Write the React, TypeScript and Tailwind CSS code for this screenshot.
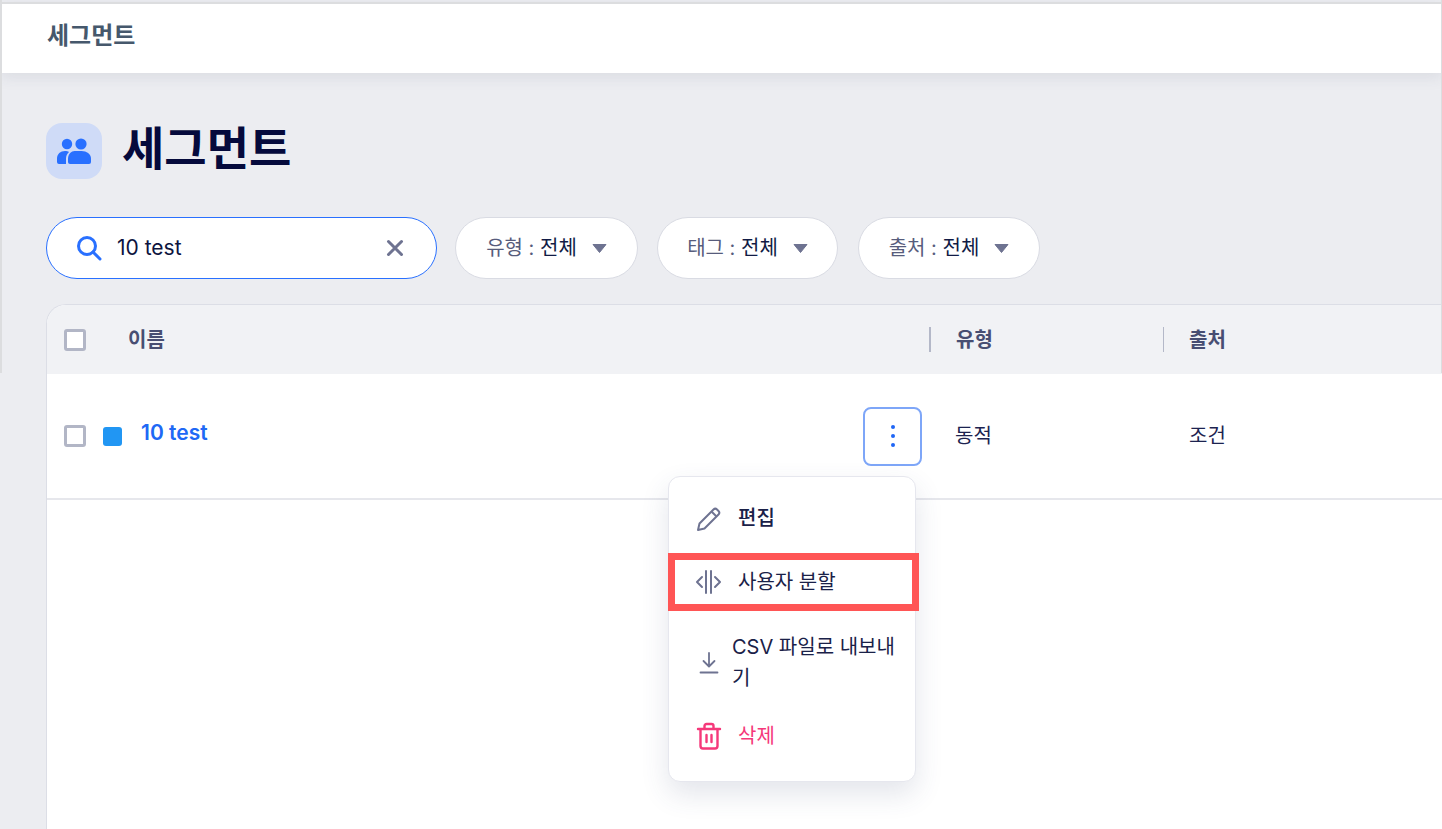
import { ReactNode } from "react";

const FONT = "[font-family:Inter,'Noto_Sans_CJK_KR',sans-serif]";

function Checkbox() {
  return <div className="w-[22px] h-[22px] rounded-[3px] border-[3px] border-[#b2b6c6] bg-white shrink-0" />;
}

function Caret() {
  return (
    <svg width="15" height="10" viewBox="0 0 15 10" className="shrink-0">
      <path d="M1 1.5h13L7.5 9.5z" fill="#6e7391" stroke="#6e7391" strokeLinejoin="round" />
    </svg>
  );
}

function FilterPill({ label, width }: { label: string; width: string }) {
  return (
    <div className={`${width} h-[62px] rounded-full bg-white border border-[#d9dbe3] flex items-center justify-center gap-[15px] text-[20px]`}>
      <span>
        <span className="text-[#575c7c]">{label} : </span>
        <span className="text-[#111b45]">전체</span>
      </span>
      <Caret />
    </div>
  );
}

function MenuItem({ icon, children, className }: { icon: ReactNode; children: ReactNode; className: string }) {
  return (
    <div className={`flex items-center ${className}`}>
      <div className="w-[28px] flex justify-center shrink-0">{icon}</div>
      {children}
    </div>
  );
}

export default function App() {
  return (
    <div className={`relative w-[1442px] h-[829px] overflow-hidden bg-[#ecedf1] ${FONT}`}>
      <div className="absolute left-0 top-0 w-[2px] h-[373px] bg-[#dcdddf] z-20" />
      <div className="absolute right-0 top-0 w-[1px] h-[373px] bg-[#dcdddf] z-20" />

      <header className="mt-[2px] h-[71px] bg-white flex items-center pl-[47px] shadow-[0_4px_14px_rgba(60,70,100,0.1)] border-t-2 border-[#dcdddf]">
        <span className="text-[24px] font-semibold text-[#46586c] relative top-[-3px]">세그먼트</span>
      </header>

      <main className="pl-[46px] pt-[50px]">
        <div className="flex items-center gap-[20px] h-[56px]">
          <div className="w-[56px] h-[56px] rounded-[16px] bg-[#cfdbf7] flex items-center justify-center">
            <svg width="36" height="28" viewBox="0 0 36 28" fill="#2970ff">
              <circle cx="11" cy="7" r="5.2" />
              <circle cx="25" cy="7" r="5.6" />
              <path d="M1 25v-3.5C1 17 4.500 14 9 14c1.500 0 3 .4 4 1-2 1.700-3 4-3 6.500V27H3a2 2 0 0 1-2-2z" />
              <path d="M12 25v-3.500c0-4.500 3.500-7.500 6.500-7.500h7c5 0 9.500 3 9.500 7.500V25a2 2 0 0 1-2 2H14a2 2 0 0 1-2-2z" />
            </svg>
          </div>
          <h1 className="text-[46px] leading-[56px] font-bold text-[#050a3c] relative top-[-3px]">세그먼트</h1>
        </div>

        <div className="flex items-center mt-[38px] h-[62px]">
          <div className="w-[391px] h-[62px] rounded-full bg-white border border-[#2970ff] flex items-center pl-[29px] pr-[32px]">
            <svg width="26" height="26" viewBox="0 0 26 26" fill="none" stroke="#2970ff" strokeWidth="3" className="shrink-0">
              <circle cx="11" cy="11" r="8.500" />
              <path d="M17 17l7 7" strokeLinecap="round" />
            </svg>
            <span className="ml-[15px] text-[21px] text-[#0d1440] flex-1">10 test</span>
            <svg width="18" height="18" viewBox="0 0 18 18" stroke="#6e7391" strokeWidth="3" strokeLinecap="round">
              <path d="M2.500 2.500l13 13M15.500 2.500l-13 13" />
            </svg>
          </div>
          <div className="ml-[18px]">
            <FilterPill label="유형" width="w-[183px]" />
          </div>
          <div className="ml-[19px]">
            <FilterPill label="태그" width="w-[181px]" />
          </div>
          <div className="ml-[20px]">
            <FilterPill label="출처" width="w-[182px]" />
          </div>
        </div>

        <section className="mt-[25px] w-[1440px] h-[560px] bg-white rounded-tl-[20px] border-l border-t border-[#dcdee6] overflow-hidden">
          <div className="h-[69px] bg-[#f1f2f5] grid grid-cols-[882px_234px_1fr] items-center text-[20px] font-semibold text-[#484e72]">
            <div className="flex items-center pl-[17px]">
              <Checkbox />
              <span className="ml-[42px]">이름</span>
            </div>
            <div className="flex items-center h-[25px] border-l-2 border-[#b4b8c8] pl-[25px]">유형</div>
            <div className="flex items-center h-[25px] border-l border-[#b4b8c8] pl-[25px]">출처</div>
          </div>

          <div className="h-[126px] border-b-2 border-[#e6e7ec] grid grid-cols-[882px_234px_1fr] items-center text-[20px] text-[#1c2350]">
            <div className="flex items-center pl-[17px]">
              <Checkbox />
              <div className="ml-[17px] w-[19px] h-[19px] rounded-[3px] bg-[#2196f3]" />
              <span className="ml-[19px] text-[21px] font-semibold text-[#2068f5] relative top-[-3px]">10 test</span>
              <div className="ml-auto mr-[7px] w-[59px] h-[59px] rounded-[8px] border-2 border-[#7ea6f8] flex flex-col items-center justify-center gap-[5px]">
                <div className="w-[4px] h-[4px] rounded-full bg-[#1f66f5]" />
                <div className="w-[4px] h-[4px] rounded-full bg-[#1f66f5]" />
                <div className="w-[4px] h-[4px] rounded-full bg-[#1f66f5]" />
              </div>
            </div>
            <div className="pl-[26px]">동적</div>
            <div className="pl-[26px]">조건</div>
          </div>
        </section>
      </main>

      {/* row action menu */}
      <div className="absolute left-[668px] top-[476px] w-[248px] h-[306px] rounded-[12px] bg-white border border-[#e6e7ee] shadow-[0_12px_28px_rgba(60,70,110,0.14)] z-10 pl-[26px] pr-[20px] text-[20px] text-[#1a2148]">
        <MenuItem
          className="h-[83px] gap-[15px]"
          icon={
            <svg width="28" height="28" viewBox="0 0 28 28" fill="none" stroke="#6e7391" strokeWidth="2" strokeLinejoin="round">
              <path d="M3 25l1.500-6.500L18.500 4.500a2.500 2.500 0 0 1 3.500 0l1.500 1.500a2.500 2.500 0 0 1 0 3.500L9.500 23.500z" />
              <path d="M16.500 6.500l5 5" />
            </svg>
          }
        >
          <span className="font-medium relative top-[-1px]">편집</span>
        </MenuItem>
        <MenuItem
          className="h-[43px] gap-[15px] mt-[0px]"
          icon={
            <svg width="28" height="28" viewBox="0 0 28 28" fill="none" stroke="#6e7391" strokeWidth="2" strokeLinecap="round" strokeLinejoin="round">
              <path d="M11 3v22M16 3v22" />
              <path d="M7 9l-5 5 5 5M20 9l5 5-5 5" />
            </svg>
          }
        >
          <span className="whitespace-nowrap">사용자 분할</span>
        </MenuItem>
        <MenuItem
          className="h-[92px] gap-[9px] mt-[14px]"
          icon={
            <svg width="20" height="24" viewBox="0 0 20 24" fill="none" stroke="#6e7391" strokeWidth="1.800" strokeLinecap="round" strokeLinejoin="round">
              <path d="M10 2v13M4.500 10l5.500 5.500 5.500-5.500M1.500 21.500h17" />
            </svg>
          }
        >
          <span className="leading-[31px]">CSV 파일로 내보내기</span>
        </MenuItem>
        <MenuItem
          className="h-[48px] gap-[15px] mt-[3px]"
          icon={
            <svg width="26" height="28" viewBox="0 0 26 28" fill="none" stroke="#f5387a" strokeWidth="2.400" strokeLinecap="round" strokeLinejoin="round">
              <path d="M2 7h22M8.500 7V4a2 2 0 0 1 2-2h5a2 2 0 0 1 2 2v3M4.500 7v17a2.500 2.500 0 0 0 2.500 2.500h12a2.500 2.500 0 0 0 2.500-2.500V7M10.500 13v7M15.500 13v7" />
            </svg>
          }
        >
          <span className="text-[#f5387a]">삭제</span>
        </MenuItem>
      </div>

      {/* red annotation box */}
      <div className="absolute left-[668px] top-[553px] w-[251px] h-[58px] border-[7px] border-[#ff5555] z-20" />
    </div>
  );
}
